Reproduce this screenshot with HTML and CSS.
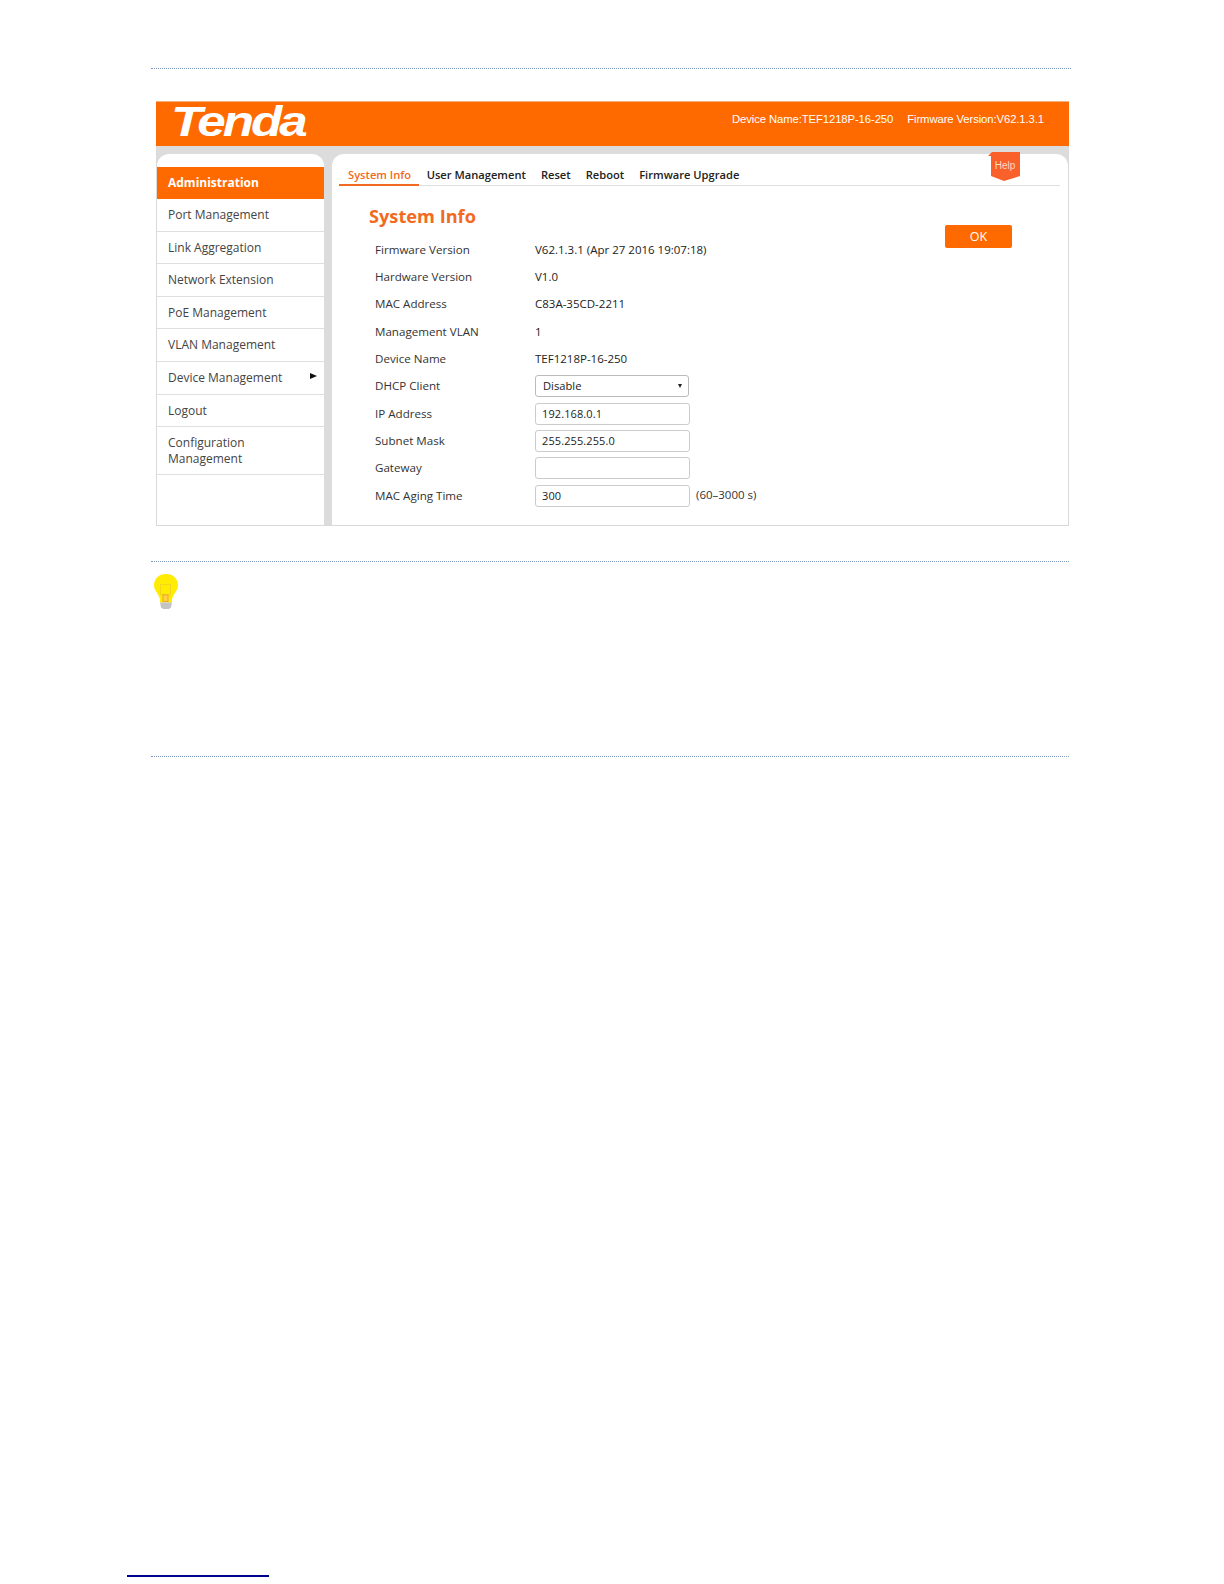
FILE: index.html
```html
<!DOCTYPE html>
<html lang="en">
<head>
<meta charset="utf-8">
<title>System Info</title>
<link rel="stylesheet" href="styles.css">
</head>
<body>
<div class="page">
  <div class="rule rule-top"></div>
  <div class="shot">
    <header class="banner">
      <div class="logo">Tenda</div>
      <div class="device">
        <span>Device Name:TEF1218P-16-250</span>
        <span>Firmware Version:V62.1.3.1</span>
      </div>
    </header>
    <div class="panes">
      <nav class="side">
        <div class="side-head">Administration</div>
        <div class="side-item">Port Management</div>
        <div class="side-item">Link Aggregation</div>
        <div class="side-item">Network Extension</div>
        <div class="side-item">PoE Management</div>
        <div class="side-item">VLAN Management</div>
        <div class="side-item side-more">Device Management<span class="arrow"></span></div>
        <div class="side-item">Logout</div>
        <div class="side-item side-tall">Configuration<br>Management</div>
      </nav>
      <main class="main">
        <div class="tabs">
          <span class="tab tab-on">System Info</span>
          <span class="tab">User Management</span>
          <span class="tab">Reset</span>
          <span class="tab">Reboot</span>
          <span class="tab">Firmware Upgrade</span>
        </div>
        <svg class="help" width="32" height="30" viewBox="0 0 32 30" aria-hidden="true">
          <path d="M0 4 L4 0 L32 0 L32 24 L16 29 L3 24 L3 4 Z" fill="#f9602a"/>
          <text x="17" y="17" text-anchor="middle" class="help-text">Help</text>
        </svg>
        <div class="ok">OK</div>
        <h1 class="title">System Info</h1>
        <div class="form">
          <div class="lbl">Firmware Version</div><div class="val">V62.1.3.1 (Apr 27 2016 19:07:18)</div>
          <div class="lbl">Hardware Version</div><div class="val">V1.0</div>
          <div class="lbl">MAC Address</div><div class="val">C83A-35CD-2211</div>
          <div class="lbl">Management VLAN</div><div class="val">1</div>
          <div class="lbl">Device Name</div><div class="val">TEF1218P-16-250</div>
          <div class="lbl">DHCP Client</div><div class="val"><div class="box box-select">Disable<span class="caret"></span></div></div>
          <div class="lbl">IP Address</div><div class="val"><div class="box">192.168.0.1</div></div>
          <div class="lbl">Subnet Mask</div><div class="val"><div class="box">255.255.255.0</div></div>
          <div class="lbl">Gateway</div><div class="val"><div class="box"></div></div>
          <div class="lbl">MAC Aging Time</div><div class="val"><div class="box">300</div><span class="hint">(60–3000 s)</span></div>
        </div>
      </main>
    </div>
  </div>
  <div class="rule rule-mid"></div>
  <svg class="bulb" width="26" height="36" viewBox="0 0 26 38" preserveAspectRatio="none" aria-hidden="true">
    <path d="M13 0 C20 0 25 5 25 12 C25 18 20 21 19 27 L19 30 L7 30 L7 27 C6 21 1 18 1 12 C1 5 6 0 13 0 Z" fill="#ffec00"/>
    <rect x="7.5" y="11" width="10" height="11" fill="none" stroke="#f0d820" stroke-width="1"/>
    <rect x="10" y="22" width="5" height="7" fill="#ffd24a" stroke="#f0a030" stroke-width="1"/>
    <path d="M7 30 L19 30 L18 35 L16 37 L10 37 L8 35 Z" fill="#c4c4c4"/>
  </svg>
  <div class="rule rule-low"></div>
  <div class="foot-line"></div>
</div>
</body>
</html>
```
FILE: styles.css
```css
* { box-sizing: border-box; }
html, body { margin: 0; padding: 0; background: #fff; }
body { font-family: "Open Sans", "Liberation Sans", sans-serif; font-size: 12px; color: #333; }
.page { width: 1224px; height: 1584px; padding: 68px 0 0 151px; overflow: hidden; }

.rule { height: 1px; border-top: 1px dotted #7f9cc0; }
.rule-top { width: 920px; }
.rule-mid { width: 918px; margin-top: 35px; }
.rule-low { width: 918px; margin-top: 146px; }

.shot { width: 913px; height: 425px; margin: 32px 0 0 5px; display: flex; flex-direction: column; background: #dcdcdc; border: solid #d9d9d9; border-width: 0 1px 1px 1px; }

.banner { height: 45px; margin: 0 -1px; background: #ff6a00; display: flex; justify-content: space-between; align-items: center; color: #fff; flex: none; border-top: 1px solid #f0b080; }
.logo { font-family: "Liberation Sans", sans-serif; font-weight: 700; font-style: italic; font-size: 42px; line-height: 40px; letter-spacing: -2.5px; margin: -5px 0 0 15px; transform: scaleX(1.22); transform-origin: left center; }
.device { font-family: "Liberation Sans", sans-serif; font-size: 11.3px; display: flex; gap: 14px; margin: -10px 25px 0 0; letter-spacing: -0.1px; }

.panes { flex: 1; display: flex; gap: 8px; padding-top: 8px; min-height: 0; }

.side { width: 167px; flex: none; background: #fff; border-radius: 12px 12px 0 0; padding-top: 13px; }
.side-head { height: 32px; background: #ff6a00; color: #fff; font-weight: 700; font-size: 12px; line-height: 32px; padding-left: 11px; }
.side-item { position: relative; height: 32.6px; line-height: 32px; padding-left: 11px; border-bottom: 1px solid #dfdfdf; font-size: 12px; color: #444; }
.side-tall { height: 48px; line-height: 16px; padding-top: 8px; }
.arrow { position: absolute; right: 7px; top: 11px; width: 0; height: 0; border-left: 7px solid #111; border-top: 3.5px solid transparent; border-bottom: 3.5px solid transparent; }

.main { position: relative; flex: 1; background: #fff; border-radius: 12px 12px 0 0; }
.tabs { display: flex; margin: 0 8px 0 7px; height: 32px; padding-top: 11px; border-bottom: 1px solid #dfdfdf; font-weight: 600; color: #222; line-height: 20px; }
.tab { padding: 0 7.5px; height: 21px; font-size: 11.15px; white-space: nowrap; }
.tab-on { color: #f26a21; padding: 0 8px 0 9px; border-bottom: 2px solid #f26a21; }

.help { position: absolute; top: -2px; left: 656px; }
.help-text { font-family: "Liberation Sans", sans-serif; font-size: 10px; fill: #ffd9c8; }

.ok { position: absolute; top: 71px; right: 56px; width: 67px; height: 23px; background: #ff6a00; color: #fff; border-radius: 2px; text-align: center; font-size: 12.5px; line-height: 23px; }

.title { margin: 17px 0 0 37px; font-size: 18.2px; line-height: 26px; font-weight: 700; color: #f26a21; }

.form { display: grid; grid-template-columns: 160px 1fr; grid-auto-rows: 27.35px; margin: 7px 0 0 43px; align-items: center; line-height: 16px; font-size: 11.6px; }
.lbl { color: #333; }
.val { display: flex; align-items: center; color: #222; font-size: 11.5px; }
.box { width: 155px; height: 22px; border: 1px solid #ccc; border-radius: 3px; padding-left: 6px; line-height: 20px; letter-spacing: 0.1px; font-size: 11px; }
.box-select { position: relative; width: 154px; padding-left: 7px; border-color: #bbb; font-size: 11.2px; letter-spacing: 0; }
.caret { position: absolute; right: 6px; top: 8px; width: 0; height: 0; border-top: 4px solid #222; border-left: 2px solid transparent; border-right: 2px solid transparent; }
.hint { margin-left: 6px; margin-top: -2px; color: #333; }

.bulb { display: block; margin: 12px 0 0 2px; }

.foot-line { width: 142px; height: 1.5px; margin: 818px 0 0 -24px; background: #000090; }
```
